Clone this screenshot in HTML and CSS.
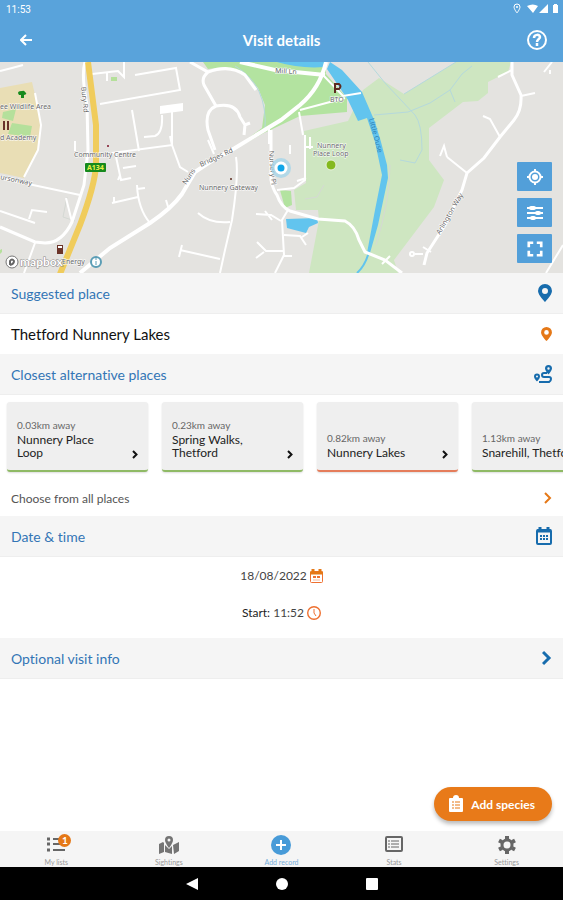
FILE: index.html
```
<!DOCTYPE html>
<html lang="en">
<head>
    <meta charset="UTF-8">
    <meta name="viewport" content="width=device-width, initial-scale=1.0">
    <title>Visit details</title>
    <link rel="stylesheet" href="styles.css">
</head>
<body>
    <header class="top">
        <div class="status">
            <span>11:53</span>
            <svg width="46" height="12" viewBox="0 0 46 12" fill="#fff">
                <path d="M4 1a3 3 0 0 0-3 3c0 2 3 6 3 6s3-4 3-6a3 3 0 0 0-3-3z" fill="none" stroke="#fff"/>
                <circle cx="4" cy="4" r="1"/>
                <path d="M14 3q6-3 11 0l-5 7zM35 1v9h-9zM40 2h1V1h3v1h1v8h-5z"/>
            </svg>
        </div>
        <div class="titlebar">
            <button class="icon-btn" aria-label="Back">
                <svg width="12" height="12" viewBox="0 0 12 12" fill="none" stroke="#fff" stroke-width="2"><path d="M12 6H1M6 1L1 6l5 5"/></svg>
            </button>
            <h1>Visit details</h1>
            <button class="icon-btn" aria-label="Help">
                <svg width="20" height="20" viewBox="0 0 20 20" fill="none" stroke="#fff" stroke-width="2">
                    <circle cx="10" cy="10" r="9"/>
                    <path d="M7 8c0-4 6-4 6-1 0 2-3 2-3 5M10 13v3" stroke-width="2.500"/>
                </svg>
            </button>
        </div>
    </header>

    <main>
        <section class="map">
            <svg class="map-canvas" viewBox="0 62 563 211" preserveAspectRatio="xMidYMid slice">
                <rect y="62" width="563" height="211" fill="#e4e3e0"/>
                <!-- school and parks -->
                <path fill="#e9deb5" d="M0 88L32 82 35 95 41 125 38 150 24 178 0 173z"/>
                <path fill="#b5e09b" d="M3 112l13-3-3 12-11-3zM12 123l20 3-2 11-22-3zM111 77h6v4h-6zM0 250l2-1v3l-2 2z"/>
                <path fill="#b3e3a0" d="M203 62H326V74L347 98V112L300 116 264 133 228 153 262 128 265 105 258 88 245 73 225 67 208 69z"/>
                <path fill="#cee6c1" d="M304 131L348 121 363 90 379 78 404 94 456 62H511L508 72 488 82V93L478 101 463 102 429 128V160L444 180 434 207 394 260 402 273H309L319 220 318 210 296 210 294 190 306 183z"/>
                <path fill="#e4e3e0" d="M394 260L430 262V273H398z"/>
                <path fill="#b3e3a0" d="M280 190l11 1 1 14-7 3z"/>
                <!-- streams -->
                <g fill="none" stroke="#b5d9dc">
                    <path d="M368 62L385 83 415 115Q422 124 422 150L415 163 400 160M374 115L408 112 430 103 450 90 462 74 472 66M450 90l5 12M404 94L456 62M235 66Q268 85 265 130"/>
                    <path d="M67 197l-4 20 12 4M390 165Q390 200 376 245M305 199l12-2 7-12" stroke="#d5d9d4"/>
                </g>
                <!-- river and pond -->
                <path fill="#62c4ee" d="M277 62H326L325 67Q300 69 277 62zM330 62L342 70 362 92 375 122 381 142 387 165 388 178 378 225 370 253 367 253 375 210 382 175 375 142 367 118 358 121 348 100 327 69zM286 219l31-1 1 5-9 4-3 6-19-5z"/>
                <path d="M369 252Q365 266 357 273" fill="none" stroke="#62c4ee" stroke-width="2"/>
                <!-- roads -->
                <g fill="none" stroke="#fff" stroke-width="2">
                    <path d="M0 71L12 68 23 65M92 74L118 71 124 77V62M107 72v9M135 75L176 68 180 90 100 104M132 110L139 151M172 112V145M162 115Q163 133 155 136L144 137M0 178L80 195M0 211L35 223M29 219l3-9 15 2M35 93L41 125 38 150 24 177M75 141v10M66 198l6 24M35 243L24 273"/>
                    <path d="M112 153L172 145 180 167 188 172M172 145l-2-9M115 152L121 180 131 178M123 168l13-2M118 180l2-5M137 185Q138 209 150 223M112 203L138 197M114 197v6M137 189l8-1M208 140l6 14M166 200l3 10"/>
                    <path d="M236 157Q239 175 232 220L225 250 220 273M198 213Q210 224 230 222M180 250L220 259M182 245l-3 12M256 214l15 1 10 6M265 211l7 9M284 251H266l-9-9M264 252l-8 6M269 128v16"/>
                    <path d="M305 135V180L294 188 277 190M299 112L303 135M310 137v12M305 147h8M306 178l-9 3M288 210L282 220 284 255 275 273M284 235L300 236 306 245M302 237l6-4M284 256h8M290 145v9"/>
                    <path d="M323 75L343 96 361 93M345 98L300 110M326 130M447 157L444 146 440 156M467 173L447 157M500 137L490 119 483 116M521 96L535 93M512 70L498 77M544 72l8-10M550 70v4M563 245L546 273M423 254h-8M423 247l8 5M382 264l8-8"/>
                    <circle cx="412" cy="254" r="2"/>
                </g>
                <g fill="none" stroke="#fff" stroke-width="3">
                    <path d="M85 62Q81 75 87 105L88 150 84 185 72 222Q62 243 45 243L35 242 0 227M190 62L208 72Q230 64 245 75L256 90M208 72Q201 78 204 85L216 106Q236 102 240 117L245 125 250 123M245 125l-1 10M216 106Q204 111 208 130L215 150"/>
                    <path d="M271 130V180Q273 190 277 195 281 207 290 211L318 219 345 221Q355 226 359 240L365 252 385 260 402 273M512 62V75L521 95Q522 110 514 120L500 137 484 158 467 173 462 190 445 225 427 253 424 265"/>
                </g>
                <path d="M326 62Q320 88 300 105L281 120 235 148 213 160 195 172 182 194Q172 208 150 223L110 248 80 273M240 62L275 70 325 75" fill="none" stroke="#fff" stroke-width="4"/>
                <path d="M160 106l23-3v8l-23 3z" fill="#fff"/>
                <path d="M88 62L96 125V165Q95 185 80 225L60 274" fill="none" stroke="#f0cc5c" stroke-width="6"/>

                <g class="place-name">
                    <text x="0" y="109">ee Wildlife Area</text>
                    <text x="0" y="140">d Academy</text>
                    <text x="74" y="157">Community Centre</text>
                    <text x="199" y="190">Nunnery Gateway</text>
                    <text x="330" y="102">BTO</text>
                    <text x="317" y="148">Nunnery</text>
                    <text x="313" y="156">Place Loop</text>
                    <text x="62" y="264">Energy</text>
                    <text transform="translate(81 87) rotate(84)">Bury Rd</text>
                    <text transform="translate(0 179) rotate(12)">ursonway</text>
                    <text transform="translate(186 185) rotate(-56)">Nuns</text>
                    <text transform="translate(201 167) rotate(-25)">Bridges Rd</text>
                    <text transform="translate(269 151) rotate(86)">Nursery Pl</text>
                    <text transform="translate(275 73) rotate(3)">Mill Ln</text>
                    <text transform="translate(440 235) rotate(-60)">Arlington Way</text>
                    <text class="river" transform="translate(369 119) rotate(75)">Little Ouse</text>
                </g>

                <rect x="85" y="163" width="21" height="9" rx="1" fill="#168a1d"/>
                <text class="road-no" x="87" y="170">A134</text>
                <path d="M22 91q-6 0-3 4h2v3h3v-3q4-1 1-3-1-2-3-1z" fill="#168a1d"/>
                <path d="M3 121h2v9H3zM7 121h2v9H7zM57 245h6v9h-6z" fill="#6b3429"/>
                <path d="M58 246h4v2h-4z" fill="#fff"/>
                <path d="M335 93v-9h4q3 2 0 5h-4" fill="none" stroke="#5d2b20" stroke-width="2"/>
                <circle cx="108" cy="146" r="1" fill="#7c1328"/>
                <circle cx="231" cy="179" r="1" fill="#5d2b20"/>
                <circle cx="281" cy="168" r="10" fill="#a5d4e8" opacity=".8"/>
                <circle cx="281" cy="168" r="5" fill="#11a6e8" stroke="#fff" stroke-width="3"/>
                <circle cx="331" cy="165" r="5" fill="#84b91e" stroke="#e9f3dc"/>

                <circle cx="12" cy="262" r="6" fill="#fff" stroke="#777"/>
                <path d="M10 265v-4q2-3 4 0 0 3-4 4" fill="none" stroke="#666" stroke-width="2"/>
                <text class="logo" x="20" y="266">mapbox</text>
                <circle cx="96" cy="262" r="5" fill="#fff" stroke="#5b9db5" stroke-width="2"/>
                <path d="M96 261v4M96 258v2" stroke="#5b9db5"/>
            </svg>
            <div class="map-tools">
                <button aria-label="Locate me">
                    <svg width="18" height="18" viewBox="0 0 18 18" fill="none" stroke="#fff" stroke-width="2"><circle cx="9" cy="9" r="5.500"/><circle cx="9" cy="9" r="3" fill="#fff" stroke="none"/><path d="M9 1v3M9 14v3M1 9h3M14 9h3"/></svg>
                </button>
                <button aria-label="Map layers">
                    <svg width="18" height="18" viewBox="0 0 18 18" stroke="#fff" stroke-width="2"><path d="M1 4h16M1 9h16M1 14h16"/><path d="M5 4h3M11 9h2M6 14h2" stroke-width="4" stroke-linecap="round"/></svg>
                </button>
                <button aria-label="Full screen">
                    <svg width="16" height="16" viewBox="0 0 18 18" fill="none" stroke="#fff" stroke-width="3"><path d="M2 7V2h5M11 2h5v5M16 11v5h-5M7 16H2v-5"/></svg>
                </button>
            </div>
        </section>

        <h2 class="bar">Suggested place
            <svg width="14" height="18" viewBox="0 0 14 18"><path fill="#176cad" fill-rule="evenodd" d="M7 0a7 7 0 0 0-7 7c0 4 7 11 7 11s7-7 7-11a7 7 0 0 0-7-7zm0 4a3 3 0 1 1 0 6 3 3 0 0 1 0-6z"/></svg>
        </h2>
        <button class="row place">Thetford Nunnery Lakes
            <svg width="11" height="14" viewBox="0 0 14 18"><path fill="#e57817" fill-rule="evenodd" d="M7 0a7 7 0 0 0-7 7c0 4 7 11 7 11s7-7 7-11a7 7 0 0 0-7-7zm0 4a3 3 0 1 1 0 6 3 3 0 0 1 0-6z"/></svg>
        </button>

        <h2 class="bar">Closest alternative places
            <svg width="18" height="18" viewBox="0 0 18 18" fill="#176cad">
                <path fill-rule="evenodd" d="M14.500 0a3.500 3.500 0 0 0-3.500 3.500c0 2 3.500 6 3.500 6s3.500-4 3.500-6a3.500 3.500 0 0 0-3.500-3.500zm0 2.300a1.200 1.200 0 1 1 0 2.400 1.200 1.200 0 0 1 0-2.400zM3 8.500a3 3 0 0 0-3 3c0 2 3 5 3 5s3-3 3-5a3 3 0 0 0-3-3zm0 2a1 1 0 1 1 0 2 1 1 0 0 1 0-2z"/>
                <path d="M13 8h-3q-2 0-2 2t2 2h5q2 0 2 2t-2 3H5" fill="none" stroke="#176cad" stroke-width="2"/>
            </svg>
        </h2>
        <div class="cards">
            <button class="card">
                <small>0.03km away</small>
                <span class="name">Nunnery Place Loop<svg width="6" height="9" viewBox="0 0 6 9"><path d="M1 1l3.500 3.500L1 8"/></svg></span>
            </button>
            <button class="card">
                <small>0.23km away</small>
                <span class="name">Spring Walks, Thetford<svg width="6" height="9" viewBox="0 0 6 9"><path d="M1 1l3.500 3.500L1 8"/></svg></span>
            </button>
            <button class="card card-red">
                <small>0.82km away</small>
                <span class="name">Nunnery Lakes<svg width="6" height="9" viewBox="0 0 6 9"><path d="M1 1l3.500 3.500L1 8"/></svg></span>
            </button>
            <button class="card">
                <small>1.13km away</small>
                <span class="name">Snarehill, Thetford<svg width="6" height="9" viewBox="0 0 6 9"><path d="M1 1l3.500 3.500L1 8"/></svg></span>
            </button>
        </div>
        <button class="row all">Choose from all places
            <svg width="8" height="12" viewBox="0 0 8 12" fill="none" stroke="#e57817" stroke-width="2"><path d="M1 1l5 5-5 5"/></svg>
        </button>

        <h2 class="bar">Date &amp; time
            <svg width="16" height="18" viewBox="0 0 16 18" fill="none" stroke="#176cad" stroke-width="2">
                <rect x="1" y="3" width="14" height="14" rx="1"/>
                <path d="M1 4h14M4 0v4M12 0v4" stroke-width="3"/>
                <path d="M4 9h2m1 0h2m1 0h2M4 12h2m1 0h2m1 0h2"/>
            </svg>
        </h2>
        <div class="when">
            <button>18/08/2022
                <svg width="13" height="14" viewBox="0 0 13 14" fill="none" stroke="#ee7030">
                    <rect x=".5" y="2.500" width="12" height="11" rx="1"/>
                    <path d="M0 4h13M3 0v4M10 0v4" stroke="#e57817" stroke-width="3"/>
                    <path d="M3 8h3m1 0h3" stroke-width="2"/>
                    <path d="M3 11h7" opacity=".5"/>
                </svg>
            </button>
            <button><span><b>Start:</b> 11:52</span>
                <svg width="14" height="14" viewBox="0 0 14 14" fill="none" stroke="#ee7030"><circle cx="7" cy="7" r="6.300" stroke-width="1.400"/><path d="M7 3v4l2 3"/></svg>
            </button>
        </div>

        <h2 class="bar">Optional visit info
            <svg width="10" height="16" viewBox="0 0 10 16" fill="none" stroke="#176cad" stroke-width="3"><path d="M1 2l6 6-6 6"/></svg>
        </h2>

        <button class="add">
            <svg width="14" height="18" viewBox="0 0 14 18">
                <path fill="#fff" d="M1 3h3q0-3 3-3t3 3h3q1 0 1 1v12q0 1-1 1H1q-1 0-1-1V4q0-1 1-1z"/>
                <path stroke="#e57817" d="M3 7h2m1 0h5M3 10h2m1 0h5M3 13h2m1 0h5"/>
            </svg>
            Add species
        </button>
    </main>

    <nav class="tabs">
        <a href="#lists">
            <svg width="18" height="16" viewBox="0 0 18 16" stroke="#666" stroke-width="2"><path d="M6 3h12M6 8h12M6 14h12"/><path d="M0 3h3M0 8h3M0 14h3" stroke-width="3"/></svg>
            My lists
            <span class="badge">1</span>
        </a>
        <a href="#sightings">
            <svg width="20" height="18" viewBox="0 0 20 18" fill="#747474">
                <path d="M0 8l4-2 1 1v9l-5 2zM6 9l4 4 3-3v8l-7-2zM14 9l6-3v9l-5 3z"/>
                <path fill-rule="evenodd" d="M10 0a4 4 0 0 0-4 4c0 3 4 8 4 8s4-5 4-8a4 4 0 0 0-4-4zm0 2.500a1.500 1.500 0 1 1 0 3 1.500 1.500 0 0 1 0-3z"/>
            </svg>
            Sightings
        </a>
        <a href="#add" class="active">
            <svg width="20" height="20" viewBox="0 0 20 20"><circle cx="10" cy="10" r="10" fill="#489bd8"/><path d="M10 5v10M5 10h10" stroke="#fff" stroke-width="2"/></svg>
            Add record
        </a>
        <a href="#stats">
            <svg width="18" height="16" viewBox="0 0 18 16" fill="none" stroke="#666" stroke-width="2"><rect x="1" y="1" width="16" height="14" rx="1"/><path d="M3 5h2m1 0h8M3 8h2m1 0h8M3 11h2m1 0h8" stroke-width="1"/></svg>
            Stats
        </a>
        <a href="#settings">
            <svg width="18" height="18" viewBox="0 0 18 18" fill="none" stroke="#666">
                <circle cx="9" cy="9" r="5" stroke-width="3"/>
                <path d="M9 0v3M9 15v3M1 4.500l3 1.500M14 12l3 1.500M1 13.500L4 12M14 6l3-1.500" stroke-width="4"/>
            </svg>
            Settings
        </a>
    </nav>

    <footer class="system">
        <button aria-label="System back"><svg width="12" height="12" viewBox="0 0 12 12" fill="#fff"><path d="M12 0v12L0 6z"/></svg></button>
        <button aria-label="System home"><svg width="12" height="12" viewBox="0 0 12 12" fill="#fff"><circle cx="6" cy="6" r="6"/></svg></button>
        <button aria-label="System recents"><svg width="12" height="12" viewBox="0 0 12 12" fill="#fff"><rect width="12" height="12" rx="1"/></svg></button>
    </footer>
</body>
</html>
```

FILE: styles.css
```
* {
    box-sizing: border-box;
}
body {
    font-family: Lato, "Open Sans", sans-serif;
    font-size: 12px;
    font-variant-ligatures: none;
    color: #444;
    background: #fff;
    display: flex;
    flex-direction: column;
    min-height: 100vh;
    margin: 0;
}
button {
    font: inherit;
    font-variant-ligatures: none;
    color: inherit;
    background: none;
    border: none;
    padding: 0;
    cursor: pointer;
}
svg {
    display: block;
    flex-shrink: 0;
}
.top {
    background: #59a3db;
    color: #fff;
}
.status {
    display: flex;
    justify-content: space-between;
    align-items: center;
    height: 18px;
    padding: 0 4px 0 6px;
    font-family: Roboto, sans-serif;
    font-size: 10px;
}
.titlebar {
    display: flex;
    justify-content: space-between;
    align-items: center;
    height: 44px;
    padding: 0 16px;
}
.icon-btn {
    display: flex;
    justify-content: center;
    width: 20px;
}
h1 {
    margin: 0;
    font-size: 15px;
    font-weight: bold;
}
main {
    flex: 1;
    display: flex;
    flex-direction: column;
}
.map {
    position: relative;
    height: 211px;
}
.map-canvas {
    width: 100%;
    height: 100%;
}
.place-name {
    font-family: "Noto Sans", sans-serif;
    font-size: 7px;
    fill: #666;
    stroke: #fff;
    stroke-width: 1px;
    paint-order: stroke;
}
.place-name .river {
    fill: #2f7fb5;
    stroke: none;
}
.road-no {
    font-family: "Noto Sans", sans-serif;
    font-size: 7px;
    font-weight: bold;
    fill: #e9f04a;
}
.logo {
    font-family: Lato, sans-serif;
    font-size: 12px;
    font-weight: bold;
    fill: #fff;
    stroke: #888;
    stroke-width: 1px;
    paint-order: stroke;
}
.map-tools {
    position: absolute;
    right: 11px;
    bottom: 10px;
    display: flex;
    flex-direction: column;
    gap: 7px;
}
.map-tools button {
    display: flex;
    justify-content: center;
    align-items: center;
    width: 35px;
    height: 29px;
    background: #529fd9;
    border-radius: 1px;
}
.bar {
    display: flex;
    justify-content: space-between;
    align-items: center;
    height: 41px;
    margin: 0;
    padding: 0 11px;
    background: #f5f5f5;
    border-bottom: 1px solid #eee;
    color: #3375b5;
    font-size: 14px;
    font-weight: normal;
}
.row {
    display: flex;
    justify-content: space-between;
    align-items: center;
    height: 40px;
    padding: 0 11px;
    text-align: left;
}
.place {
    color: #111;
    font-size: 15px;
}
.all {
    height: 36px;
    color: #555;
}
.cards {
    display: flex;
    gap: 14px;
    padding: 7px 7px 8px;
    overflow: hidden;
}
.card {
    flex: 0 0 141px;
    display: flex;
    flex-direction: column;
    justify-content: flex-end;
    height: 70px;
    padding: 0 10px 11px;
    background: #efefef;
    border-bottom: 2px solid #8fba65;
    border-radius: 3px;
    text-align: left;
    box-shadow: 0 1px 2px #ddd;
}
.card-red {
    border-color: #e57d5b;
}
.card small {
    color: #666;
    font-size: 10px;
    line-height: 15px;
}
.name {
    display: flex;
    justify-content: space-between;
    align-items: flex-end;
    gap: 20px;
    color: #222;
    line-height: 13px;
}
.card:last-child .name {
    white-space: nowrap;
}
.name svg {
    fill: none;
    stroke: #111;
    stroke-width: 2px;
}
.when {
    display: flex;
    flex-direction: column;
    align-items: center;
    gap: 20px;
    padding: 10px 0 17px;
}
.when button {
    display: flex;
    align-items: center;
    gap: 3px;
    height: 17px;
}
.when b {
    font-weight: normal;
    color: #222;
}
.add {
    display: flex;
    align-items: center;
    gap: 8px;
    height: 34px;
    margin: auto 11px 10px auto;
    padding: 0 17px 0 15px;
    background: #e87a19;
    border-radius: 17px;
    color: #fff;
    font-weight: bold;
    box-shadow: 0 3px 4px #bbb;
}
.tabs {
    display: grid;
    grid-template-columns: repeat(5, 1fr);
    height: 36px;
    background: #f5f5f5;
}
.tabs a {
    position: relative;
    display: flex;
    flex-direction: column;
    align-items: center;
    justify-content: space-between;
    padding-top: 5px;
    color: #999;
    font-size: 7px;
    line-height: 9px;
    text-decoration: none;
}
.tabs .active {
    padding-top: 4px;
    color: #76acd9;
}
.badge {
    position: absolute;
    top: 3px;
    left: 50%;
    margin-left: 2px;
    width: 13px;
    height: 13px;
    border-radius: 50%;
    background: #e57817;
    color: #fff;
    font-size: 10px;
    font-weight: bold;
    line-height: 13px;
    text-align: center;
}
.system {
    display: flex;
    justify-content: center;
    gap: 78px;
    height: 33px;
    background: #000;
}
```
